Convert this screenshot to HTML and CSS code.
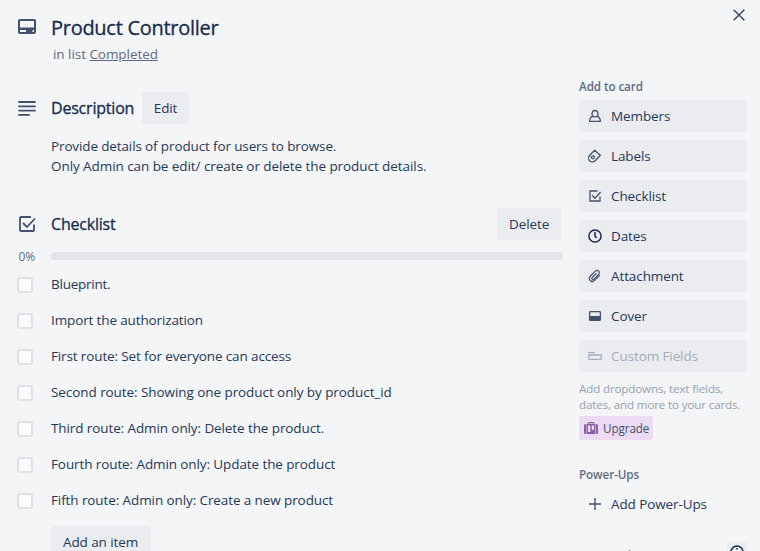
FILE: index.html
```html
<!DOCTYPE html>
<html lang="en">
<head>
<meta charset="utf-8">
<title>Product Controller</title>
<link rel="stylesheet" href="styles.css">
</head>
<body>
<div class="card">
  <main class="main">
    <header class="card-head">
      <svg class="lead-icon" width="18" height="15" viewBox="0 0 18 15"><path fill-rule="evenodd" d="M2 0h14a2 2 0 0 1 2 2v11a2 2 0 0 1-2 2H2a2 2 0 0 1-2-2V2a2 2 0 0 1 2-2zM2 2v6.500h14V2zM2 11v2h6v-2zM14.500 11v2h1.500v-2z"/></svg>
      <div>
        <h1 class="title">Product Controller</h1>
        <p class="in-list">in list <a>Completed</a></p>
      </div>
    </header>

    <section class="row">
      <svg class="lead-icon" width="18" height="15" viewBox="0 0 18 15"><path d="M1 1h16M1 5.300h16M1 9.600h16M1 13.900h10" fill="none" stroke="#42526e" stroke-width="1.800" stroke-linecap="round"/></svg>
      <h2>Description</h2>
      <button class="button edit">Edit</button>
    </section>
    <div class="description">
      <p class="tight">Provide details of product for users to browse.</p>
      <p class="loose">Only Admin can be edit/ create or delete the product details.</p>
    </div>

    <section class="row">
      <svg class="lead-icon" width="18" height="16" viewBox="0 0 18 16"><path d="M13 1H3Q2 1 2 2v12q0 1 1 1h12q1 0 1-1V8.500M5 7l4 4L17 2.500" fill="none" stroke="#42526e" stroke-width="1.800"/></svg>
      <h2>Checklist</h2>
      <button class="button delete">Delete</button>
    </section>
    <div class="progress"><span class="percent">0%</span><div class="bar"></div></div>
    <ul class="items">
      <li><i class="box"></i><span class="tighter">Blueprint.</span></li>
      <li><i class="box"></i><span class="tight">Import the authorization</span></li>
      <li><i class="box"></i><span class="tight">First route: Set for everyone can access</span></li>
      <li><i class="box"></i><span class="loose">Second route: Showing one product only by product_id</span></li>
      <li><i class="box"></i><span>Third route: Admin only: Delete the product.</span></li>
      <li><i class="box"></i><span>Fourth route: Admin only: Update the product</span></li>
      <li><i class="box"></i><span>Fifth route: Admin only: Create a new product</span></li>
    </ul>
    <button class="button add-item">Add an item</button>
  </main>

  <aside class="side">
    <div class="close"><svg width="12" height="12" viewBox="0 0 12 12"><path d="M.7.7l10.600 10.600M11.300.7L.7 11.300" stroke="#42526e" stroke-width="1.600"/></svg></div>
    <h3>Add to card</h3>
    <nav class="actions">
      <button class="action"><svg viewBox="0 0 16 16"><path d="M6.100 8.200C4.900 7.400 4.800 5.700 5.200 4.500 5.600 3.200 6.700 2.500 8 2.500s2.400.7 2.800 2c.4 1.200.3 2.900-.9 3.700M6.100 8.200C3.700 9 2.700 10.800 2.600 13.300h10.800C13.300 10.800 12.300 9 9.900 8.200M6.100 8.200Q8 9.600 9.900 8.200"/></svg><span>Members</span></button>
      <button class="action"><svg viewBox="0 0 16 16"><path d="M7.700 2.200l5.600 5.100-4.800 5.200c-1.700 1.800-4.200 1.900-5.700.5s-1.600-3.900-.3-5.500z" stroke-linejoin="round"/><circle cx="5.900" cy="9.300" r="1.500"/></svg><span>Labels</span></button>
      <button class="action"><svg viewBox="0 0 16 16"><path d="M10.500 3H3v10h10V8.500M5 7.300l3 3L13.700 4"/></svg><span>Checklist</span></button>
      <button class="action dates"><svg viewBox="0 0 16 16"><circle cx="8" cy="8" r="6.100"/><path d="M8 4v4.300l1.700 1.700"/></svg><span>Dates</span></button>
      <button class="action"><svg viewBox="0 0 16 16"><path d="M12.800 7.200l-5 5c-1.500 1.500-3.400 1.500-4.600.3s-1.200-3 .3-4.500l4.800-4.800c1-1 2.500-1 3.400-.1s.9 2.300-.1 3.300l-4.700 4.700c-.6.600-1.300.6-1.800.1s-.4-1.200.1-1.700l4.400-4.400" stroke-width="1.200"/></svg><span>Attachment</span></button>
      <button class="action"><svg viewBox="0 0 16 16"><rect x="2.600" y="3.600" width="10.800" height="8.800" rx=".8"/><path class="solid" d="M2.500 8h11v4.500h-11z"/></svg><span>Cover</span></button>
      <button class="action disabled"><svg viewBox="0 0 16 16"><path d="M1 4.600h7"/><rect x="1.700" y="7" width="12.600" height="4.300" rx=".7"/></svg><span>Custom Fields</span></button>
    </nav>
    <p class="hint">Add dropdowns, text fields,<br>dates, and more to your cards.</p>
    <button class="upgrade"><svg width="14" height="12" viewBox="0 0 14 12"><path d="M4.300 2V1.200Q4.300.6 5 .6h4q.7 0 .7.600V2" fill="none" stroke="#89609e" stroke-width="1.200"/><rect y="2" width="14" height="10" rx="1.500" fill="#89609e"/><path d="M2.500 2.200v9.600M11.500 2.200v9.600" stroke="#dcc4e6" stroke-width=".7"/><path d="M4 3.500h2.300V10H4zM7.700 3.500H10v4.200H7.700z" fill="#eddbf4"/></svg><span>Upgrade</span></button>
    <h3 class="power">Power-Ups</h3>
    <button class="action plain"><svg viewBox="0 0 16 16"><path d="M8 2v12M2 8h12" stroke-width="1.400"/></svg><span>Add Power-Ups</span></button>
    <div class="automation"><h3>Automation</h3><span class="info"><svg width="14" height="14" viewBox="0 0 14 14"><circle cx="7" cy="7" r="6" fill="none" stroke="#172b4d" stroke-width="1.500"/><path d="M7 3v1.500M7 6v5" stroke="#172b4d" stroke-width="1.500"/></svg></span></div>
  </aside>
</div>
</body>
</html>
```
FILE: styles.css
```css
* { box-sizing: border-box; }
html, body { margin: 0; height: 551px; overflow: hidden; }
body { background: #f4f5f7; color: #263959; font: 13.5px/20px "Open Sans", "Noto Sans", sans-serif; letter-spacing: -.1px; }
h1, h2, h3, p, ul { margin: 0; padding: 0; font-weight: 400; }
button { border: 0; padding: 0; margin: 0; font: inherit; color: inherit; letter-spacing: inherit; text-align: left; }
.loose { letter-spacing: -.07px; }
.tight { letter-spacing: -.13px; }
.tighter { letter-spacing: -.25px; }
.card { display: flex; height: 551px; overflow: hidden; }
.main { width: 563px; margin-right: 16px; flex: none; white-space: nowrap; }
.lead-icon { margin-left: 18px; margin-right: 15px; flex: none; fill: #42526e; }

.card-head { display: flex; padding-top: 16px; height: 92px; }
.card-head .lead-icon { margin-top: 3px; }
.title { font-size: 20px; line-height: 24px; letter-spacing: -.28px; color: #172b4d; -webkit-text-stroke: .3px #172b4d; }
.in-list { color: #5e6c84; padding-left: 2px; margin-top: 4px; letter-spacing: -.05px; }
.in-list a { text-decoration: underline; }

.row { display: flex; align-items: center; height: 32px; }
.row h2 { font-size: 16px; line-height: 20px; letter-spacing: -.2px; color: #172b4d; -webkit-text-stroke: .3px #172b4d; }
.button { background: #eaecf0; border-radius: 3px; height: 32px; line-height: 32px; padding: 0 12px; }
.edit { width: 47px; margin-left: 7.5px; }
.description { padding: 12px 0 0 51px; height: 84px; }
.delete { width: 64px; margin-left: auto; margin-right: 2px; }
.progress { display: flex; align-items: center; height: 16px; margin-top: 8px; }
.percent { width: 51px; padding: 1px 0 0 18.5px; font-size: 12px; line-height: 16px; color: #5e6c84; }
.bar { flex: 1; height: 8px; border-radius: 4px; background: #e2e4ea; }
.items { list-style: none; margin-top: 3px; }
.items li { display: flex; align-items: center; height: 36px; }
.items span { padding-bottom: 2px; }
.box { width: 16px; height: 16px; margin: 0 18px 0 17px; background: #fafbfc; border: 2px solid #dfe1e6; border-radius: 2px; }
.add-item { width: 100px; margin: 7px 0 0 51px; display: block; }

.side { width: 168px; flex: none; white-space: nowrap; }
.close { display: flex; justify-content: flex-end; padding: 9px 2px 0 0; height: 78px; }
.side h3 { font-size: 11.7px; line-height: 16px; font-weight: 600; color: #5e6c84; }
.actions { display: flex; flex-direction: column; gap: 8px; margin-top: 6px; }
.action { display: flex; align-items: center; gap: 8px; width: 168px; height: 32px; padding-left: 8px; border-radius: 3px; background: #eaecf0; }
.action svg { width: 16px; height: 16px; fill: none; stroke: #42526e; stroke-width: 1.3; }
.action .solid { fill: #42526e; stroke: none; }
.action.dates svg { stroke: #172b4d; stroke-width: 1.5; }
.action.disabled { color: #a5adba; }
.action.disabled svg { stroke: #a5adba; }
.hint { margin-top: 9px; font-size: 11.6px; line-height: 16px; letter-spacing: -.14px; color: #97a0af; }
.upgrade { display: flex; align-items: center; gap: 5px; width: 74px; height: 24px; margin-top: 3px; padding-left: 5px; border-radius: 3px; background: #eddbf4; font-size: 11.7px; color: #42526e; }
.side .power { margin-top: 26px; margin-bottom: 6px; }
.action.plain { background: transparent; }
.automation { display: flex; justify-content: space-between; margin-top: 22px; }
.automation h3 { margin-top: 5px; }
.info { display: grid; place-items: center; width: 20px; height: 20px; border-radius: 3px; background: #eaecf0; }
```
